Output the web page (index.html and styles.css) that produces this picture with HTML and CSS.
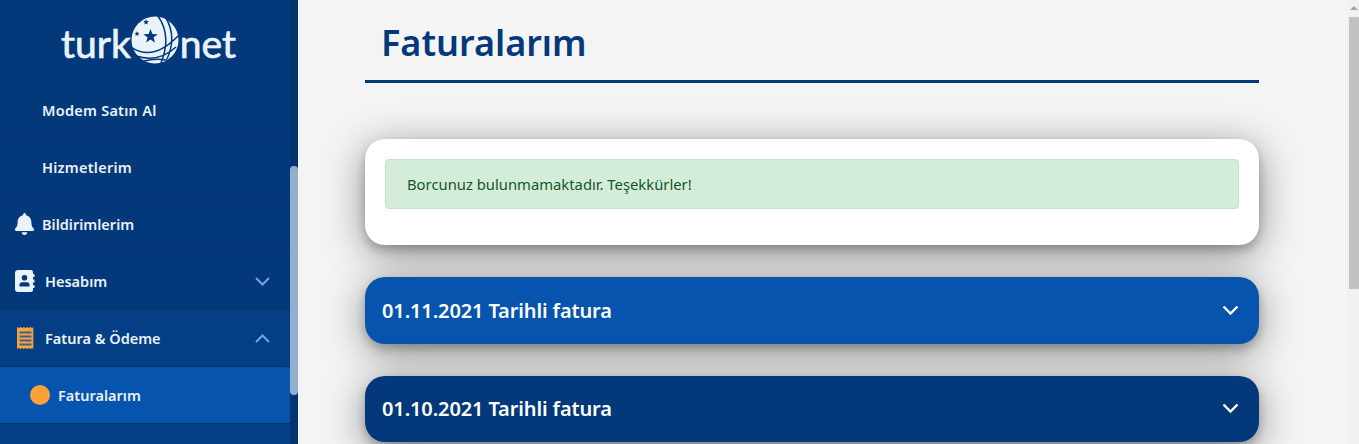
FILE: index.html
```html
<!DOCTYPE html>
<html lang="tr">
<head>
<meta charset="utf-8">
<title>Faturalarım</title>
<link rel="stylesheet" href="styles.css">
</head>
<body>
<aside class="sidebar">
  <div class="side-inner">
    <div class="logo">
      <span class="logo-word">turk</span>
      <svg class="globe" width="48" height="48" viewBox="0 0 48 48">
        <circle cx="24" cy="24" r="23.5" fill="#eaf2fc"/>
        <path d="M27 0 Q41 20 30 47 M35 2 Q46 21 36 43 M0 31 Q22 46 47 20 M5 40 Q28 47 45 31 M13 45 Q24 42 36 44" fill="none" stroke="#03397a" stroke-width="1.500"/>
        <path d="M19.500 13l1.900 5 5.300.2-4.200 3.300 1.500 5.100-4.500-3-4.400 3 1.500-5.100-4.200-3.300 5.300-.2z" fill="#03397a"/>
        <path d="M15 3l.8 2 2.200.1-1.700 1.400.6 2.100-1.900-1.200-1.800 1.200.6-2.100-1.700-1.400 2.100-.1z" fill="#03397a"/>
        <path d="M6 15l.7 1.800 1.900.1-1.500 1.200.5 1.900-1.600-1.100-1.600 1.100.5-1.900-1.500-1.200 1.900-.1z" fill="#03397a"/>
      </svg>
      <span class="logo-word">net</span>
    </div>
    <nav class="menu">
      <a class="row"><span class="label plain">Modem Satın Al</span></a>
      <a class="row"><span class="label plain">Hizmetlerim</span></a>
      <a class="row">
        <svg class="ico bell" width="21" height="22" viewBox="0 0 448 512"><path fill="#eaf2fc" d="M224 512c35.300 0 64-28.700 64-64H160c0 35.300 28.700 64 64 64zm215.400-149.700c-19.300-20.800-55.500-52-55.500-154.300 0-77.700-54.500-139.900-128-155.200V32c0-17.700-14.300-32-32-32s-32 14.300-32 32v20.800C118.400 68.100 64 130.300 64 208c0 102.300-36.200 133.500-55.500 154.300-6 6.400-8.600 14.100-8.500 21.700.1 16.400 13 32 32.100 32h383.800c19.100 0 32-15.600 32.100-32 .1-7.600-2.600-15.300-8.500-21.700z"/></svg>
        <span class="label">Bildirimlerim</span>
      </a>
      <a class="row">
        <svg class="ico" width="20" height="22" viewBox="0 0 20 22"><path fill="#eaf2fc" fill-rule="evenodd" d="M3 0h13a2 2 0 0 1 2 2v2h1.500v3H18v2.500h1.500v3H18V15h1.500v3H18v2a2 2 0 0 1-2 2H3a3 3 0 0 1-3-3V3a3 3 0 0 1 3-3zm6.500 5a2.800 2.800 0 1 0 0 5.600 2.800 2.800 0 0 0 0-5.600zM4.500 16.500h10v-1.700a2.500 2.500 0 0 0-2.500-2.500H7a2.500 2.500 0 0 0-2.500 2.500z"/></svg>
        <span class="label">Hesabım</span>
        <svg class="chev" width="15" height="9" viewBox="0 0 15 9"><path d="M1 1l6.500 6.500L14 1" fill="none" stroke="#6ea4e6" stroke-width="2"/></svg>
      </a>
      <a class="row open">
        <svg class="ico receipt" width="17" height="22" viewBox="0 0 17 22"><path fill="#f9a23c" d="M0 0l1.700 1 1.700-1 1.700 1 1.700-1 1.700 1 1.700-1 1.700 1 1.700-1 1.700 1 1 -1v22l-1-1-1.700 1-1.700-1-1.700 1-1.700-1-1.700 1-1.700-1-1.700 1-1.700-1-1.700 1z"/><path d="M2.500 5.500h12M2.500 9.500h12M2.500 13.500h12M2.500 17.500h12" stroke="#3f6190" stroke-width="1.800"/></svg>
        <span class="label">Fatura &amp; Ödeme</span>
        <svg class="chev" width="15" height="9" viewBox="0 0 15 9"><path d="M1 8l6.500-6.500L14 8" fill="none" stroke="#6ea4e6" stroke-width="2"/></svg>
      </a>
      <a class="row active"><span class="dot"></span><span class="label">Faturalarım</span></a>
      <a class="row open"></a>
    </nav>
  </div>
  <div class="side-bar"><div class="side-thumb"></div></div>
</aside>
<main class="main">
  <div class="content">
    <h1 class="title">Faturalarım</h1>
    <section class="card">
      <div class="alert">Borcunuz bulunmamaktadır. Teşekkürler!</div>
    </section>
    <div class="acc light"><span>01.11.2021 Tarihli fatura</span><svg width="17" height="11" viewBox="0 0 17 11"><path d="M1.500 1.500l7 7 7-7" fill="none" stroke="#fff" stroke-width="2.400"/></svg></div>
    <div class="acc dark"><span>01.10.2021 Tarihli fatura</span><svg width="17" height="11" viewBox="0 0 17 11"><path d="M1.500 1.500l7 7 7-7" fill="none" stroke="#fff" stroke-width="2.400"/></svg></div>
  </div>
</main>
<div class="page-bar">
  <div class="arrow"></div>
  <div class="page-thumb"></div>
</div>
</body>
</html>
```
FILE: styles.css
```css
* { box-sizing: border-box; }
html, body { height: 100%; margin: 0; overflow: hidden; }
body {
  display: flex;
  background: #f4f4f4;
  font-family: "Noto Sans", "Open Sans", sans-serif;
}
.sidebar {
  width: 298px;
  flex: none;
  height: 444px;
  display: flex;
  background: #03397a;
  overflow: hidden;
}
.side-inner { width: 290px; flex: none; }
.logo {
  height: 82px;
  padding: 16px 0 0 61px;
  display: flex;
  align-items: flex-start;
  color: #eaf2fc;
}
.logo-word {
  font-family: "Lato", sans-serif;
  font-size: 39px;
  line-height: 48px;
  font-weight: 400;
  -webkit-text-stroke: .7px #eaf2fc;
  margin-top: 3px;
}
.globe { margin: 0 1px 0 0; flex: none; }
.menu { display: flex; flex-direction: column; }
.row {
  height: 57px;
  flex: none;
  display: flex;
  align-items: center;
  padding: 0 20px 0 15px;
  border-bottom: 1px solid #03346f;
  color: #eaf2fc;
  font-size: 14.5px;
  font-weight: 600;
}
.row.open { background: #043f85; border-bottom-color: #03346f; }
.row.active { background: #0654ad; padding-left: 30px; border-bottom-color: #03346f; }
.ico { flex: none; margin-right: 10px; }
.bell { margin-left: -1px; margin-right: 7px; }
.receipt { margin-left: 2px; margin-right: 11px; }
.label { flex: 1; }
.label.plain { padding-left: 27px; letter-spacing: .25px; }
.chev { flex: none; }
.dot {
  width: 20px;
  height: 20px;
  border-radius: 50%;
  background: #fca13a;
  margin-right: 8px;
  flex: none;
}
.side-bar { width: 8px; background: #03346f; flex: none; }
.side-thumb {
  width: 8px;
  height: 229px;
  margin-top: 166px;
  background: #94afce;
  border-radius: 4px;
}
.main { flex: 1; min-width: 0; }
.content { width: 894px; margin-left: 67px; }
.title {
  margin: 0 0 56px;
  height: 83px;
  padding: 18px 0 0 16px;
  border-bottom: 3px solid #03397a;
  color: #03397a;
  font-size: 36px;
  line-height: 50px;
  font-weight: 600;
}
.card {
  height: 106px;
  padding: 20px;
  margin-bottom: 32px;
  background: #fff;
  border-radius: 20px;
  box-shadow: 0 5px 10px rgba(0, 0, 0, .22), 0 8px 40px rgba(0, 0, 0, .42);
}
.alert {
  height: 50px;
  padding: 0 21px;
  display: flex;
  align-items: center;
  background: #d4edda;
  border: 1px solid #c3e6cb;
  border-radius: 4px;
  color: #155724;
  font-size: 14.8px;
}
.acc {
  height: 67px;
  margin-bottom: 32px;
  padding: 0 20px 0 17px;
  display: flex;
  align-items: center;
  justify-content: space-between;
  border-radius: 20px;
  color: #fff;
  font-size: 20px;
  letter-spacing: -.12px;
  font-weight: 600;
  box-shadow: 0 5px 10px rgba(0, 0, 0, .22), 0 8px 40px rgba(0, 0, 0, .42);
}
.acc.light { background: #0654ad; }
.acc.dark { background: #03397a; height: 66px; padding-bottom: 1px; }
.page-bar { width: 12px; flex: none; height: 444px; background: #f1f1f1; padding-left: 2px; }
.arrow {
  width: 0;
  height: 0;
  margin: 6px 0 0 1px;
  border-left: 4px solid transparent;
  border-right: 4px solid transparent;
  border-bottom: 4px solid #a3a3a3;
}
.page-thumb { width: 10px; height: 272px; margin-top: 7px; background: #c1c1c1; }
```
